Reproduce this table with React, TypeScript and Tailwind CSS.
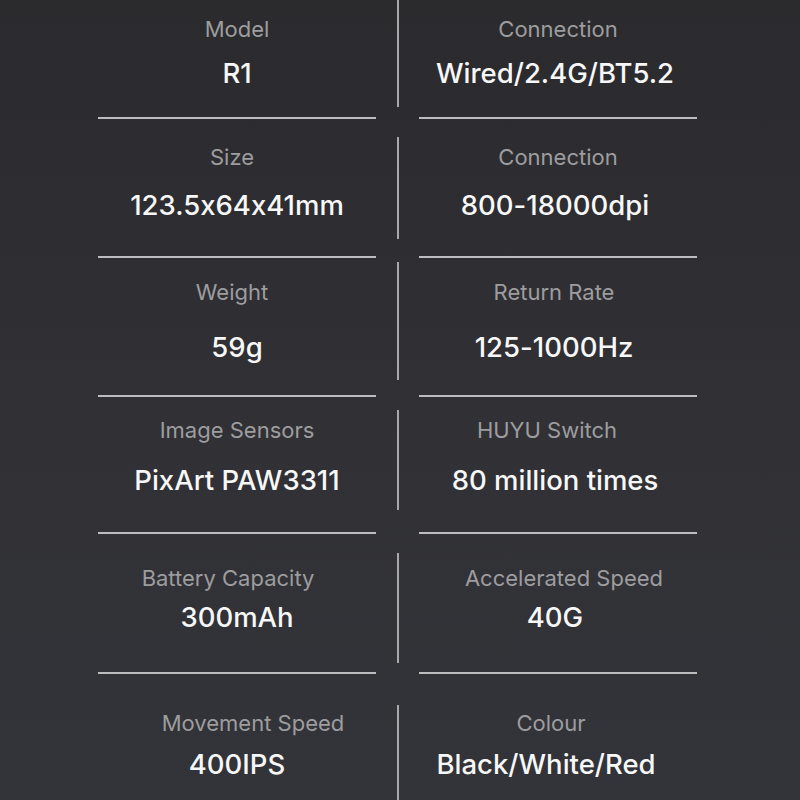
import React from "react";

type Cell = { label: string; value: string; lo?: string; vo?: string };
type Row = {
  h: string;
  pt: string;
  gap: string;
  vline: string;
  left: Cell;
  right: Cell;
  last?: boolean;
};

const rows: Row[] = [
  {
    h: "h-[117px]", pt: "pt-[15px]", gap: "gap-[12px]", vline: "pt-[0px] pb-[10px]",
    left: { label: "Model", value: "R1" },
    right: { label: "Connection", value: "Wired/2.4G/BT5.2", vo: "pr-[6px]" },
  },
  {
    h: "h-[137px]", pt: "pt-[24px]", gap: "gap-[16px]", vline: "pt-[18px] pb-[17px]",
    left: { label: "Size", value: "123.5x64x41mm", lo: "pr-[10px]" },
    right: { label: "Connection", value: "800-18000dpi", vo: "pr-[6px]" },
  },
  {
    h: "h-[137px]", pt: "pt-[20px]", gap: "gap-[23px]", vline: "pt-[4px] pb-[15px]",
    left: { label: "Weight", value: "59g", lo: "pr-[10px]" },
    right: { label: "Return Rate", value: "125-1000Hz", lo: "pr-[8px]", vo: "pr-[8px]" },
  },
  {
    h: "h-[135px]", pt: "pt-[19px]", gap: "gap-[18px]", vline: "pt-[13px] pb-[22px]",
    left: { label: "Image Sensors", value: "PixArt PAW3311" },
    right: { label: "HUYU Switch", value: "80 million times", lo: "pr-[22px]", vo: "pr-[6px]" },
  },
  {
    h: "h-[138px]", pt: "pt-[30px]", gap: "gap-[7px]", vline: "pt-[19px] pb-[9px]",
    left: { label: "Battery Capacity", value: "300mAh", lo: "pr-[18px]" },
    right: { label: "Accelerated Speed", value: "40G", lo: "pl-[12px]", vo: "pr-[6px]" },
  },
  {
    h: "h-[126px]", pt: "pt-[35px]", gap: "gap-[9px]", vline: "pt-[31px] pb-[0px]",
    left: { label: "Movement Speed", value: "400IPS", lo: "pl-[32px]" },
    right: { label: "Colour", value: "Black/White/Red", lo: "pr-[14px]", vo: "pr-[24px]" },
    last: true,
  },
];

function SpecCell({ cell, pt, gap }: { cell: Cell; pt: string; gap: string }) {
  return (
    <div className={`w-[278px] flex flex-col items-center ${pt} ${gap}`}>
      <div className={`text-[22px] leading-[28px] text-[#9d9d9f] font-normal whitespace-nowrap ${cell.lo ?? ""}`}>
        {cell.label}
      </div>
      <div className={`text-[27.5px] leading-[36px] text-[#f7f7f7] font-medium whitespace-nowrap ${cell.vo ?? ""}`}>
        {cell.value}
      </div>
    </div>
  );
}

export default function App() {
  return (
    <div
      className="w-[800px] h-[800px] overflow-hidden bg-gradient-to-b from-[#2b2b2e] via-[#303035] to-[#333439] flex flex-col [font-feature-settings:'calt'_0]"
      style={{ fontFamily: "Inter, 'Noto Sans', sans-serif" }}
    >
      {rows.map((r, i) => (
        <React.Fragment key={i}>
          <div className={`${r.h} flex pl-[98px] shrink-0`}>
            <SpecCell cell={r.left} pt={r.pt} gap={r.gap} />
            <div className={`w-[43px] flex justify-center ${r.vline}`}>
              <div className="w-[2px] h-full bg-[#a8a8aa]" />
            </div>
            <SpecCell cell={r.right} pt={r.pt} gap={r.gap} />
          </div>
          {!r.last && (
            <div className="h-[2px] flex pl-[98px] gap-[43px] shrink-0">
              <div className="w-[278px] h-full bg-[#bdbdbf]" />
              <div className="w-[278px] h-full bg-[#bdbdbf]" />
            </div>
          )}
        </React.Fragment>
      ))}
    </div>
  );
}
